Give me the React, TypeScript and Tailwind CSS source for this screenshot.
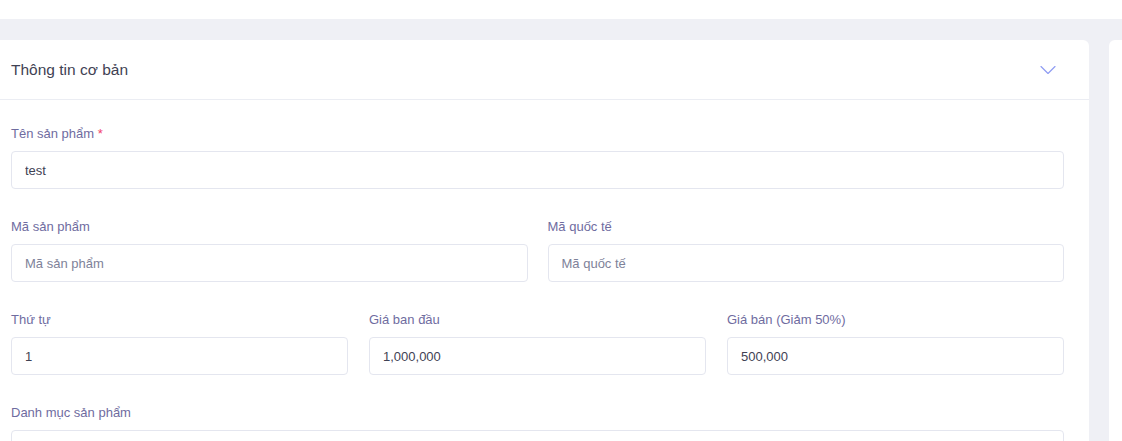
import { ChevronDown } from "lucide-react";

type FieldProps = {
  label: string;
  value?: string;
  placeholder?: string;
  required?: boolean;
};

function Field({ label, value, placeholder, required }: FieldProps) {
  return (
    <div className="flex flex-col">
      <label className="h-5 mb-[7px] text-[13px] leading-5 text-[#6f6c9f]">
        {label}
        {required && <span className="text-[#f1416c]"> *</span>}
      </label>
      <input
        readOnly
        defaultValue={value}
        placeholder={placeholder}
        className="h-[38px] w-full rounded-[4px] border border-[#e4e6ef] bg-white px-[13px] text-[13px] text-[#3f4254] placeholder:text-[#7e8299] outline-none"
      />
    </div>
  );
}

export default function App() {
  return (
    <div
      className="w-[1122px] h-[441px] overflow-hidden bg-[#eff0f5]"
      style={{ fontFamily: '"Liberation Sans", Arial, sans-serif' }}
    >
      {/* top bar */}
      <div className="h-[19px] bg-white" />

      <div className="flex gap-5 pt-[21px] -ml-[9px]">
        {/* main card */}
        <div className="w-[1098px] shrink-0 rounded-md bg-white">
          <div className="flex h-[60px] items-center justify-between border-b border-[#ebedf3] pl-5 pr-[27px]">
            <h3 className="text-[15.5px] text-[#3f4254]">Thông tin cơ bản</h3>
            <ChevronDown size={28} strokeWidth={1} className="text-[#8f9cf3]" />
          </div>

          <div className="flex flex-col gap-7 pl-5 pr-[25px] pt-6 pb-6">
            <Field label="Tên sản phẩm" value="test" required />

            <div className="grid grid-cols-2 gap-5">
              <Field label="Mã sản phẩm" placeholder="Mã sản phẩm" />
              <Field label="Mã quốc tế" placeholder="Mã quốc tế" />
            </div>

            <div className="grid grid-cols-3 gap-[21px]">
              <Field label="Thứ tự" value="1" />
              <Field label="Giá ban đầu" value="1,000,000" />
              <Field label="Giá bán (Giảm 50%)" value="500,000" />
            </div>

            <Field label="Danh mục sản phẩm" placeholder="" />
          </div>
        </div>

        {/* side card */}
        <div className="w-[300px] shrink-0 rounded-md bg-white h-[500px]" />
      </div>
    </div>
  );
}
